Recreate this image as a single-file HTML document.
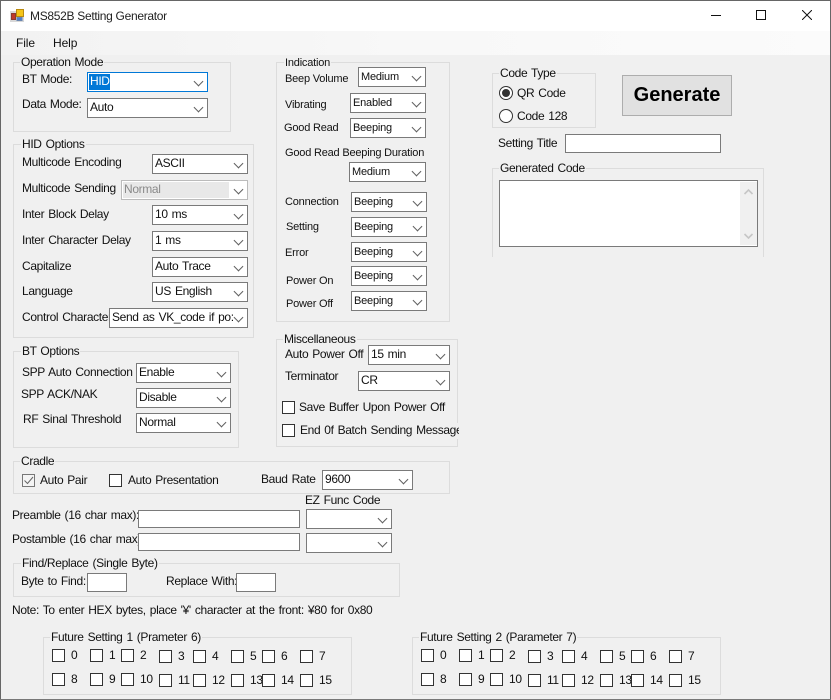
<!DOCTYPE html>
<html><head><meta charset="utf-8"><title>MS852B Setting Generator</title>
<style>
html,body{margin:0;padding:0;width:831px;height:700px;overflow:hidden;background:#f0f0f0}
body{position:relative;font:12px/14px "Liberation Sans",sans-serif;color:#111;word-spacing:1px;letter-spacing:-.35px}
div,span,b,i{position:absolute;box-sizing:border-box}
.t{white-space:nowrap;height:14px}
.g{border:1px solid #dcdcdc}
.l{background:#f0f0f0;padding:0 1px;white-space:nowrap;height:14px}
.c{background:#fff;border:1px solid #7a7a7a;height:20px;line-height:17px;padding-left:2px;white-space:nowrap;overflow:hidden}
.c::after{content:"";position:absolute;right:5px;top:5px;width:6px;height:6px;border-right:1px solid #606060;border-bottom:1px solid #606060;transform:rotate(45deg)}
.i{background:#fff;border:1px solid #7a7a7a}
.k{width:13px;height:13px;background:#fff;border:1px solid #333}
.s{word-spacing:0;font-size:11px;letter-spacing:-.2px}
.c.s{line-height:18px}
</style></head><body>
<div style="left:0;top:1px;width:831px;height:30px;background:#fff"></div>
<div style="left:0;top:31px;width:831px;height:24px;background:linear-gradient(90deg,#f2f2f2,#f8f8f8 50%,#fbfbfb)"></div>
<div style="left:0;top:0;width:831px;height:1px;background:#666"></div>
<div style="left:0;top:0;width:1px;height:700px;background:#666"></div>
<div style="left:830px;top:0;width:1px;height:700px;background:#666"></div>
<div style="left:0;top:699px;width:831px;height:1px;background:#777"></div>

<svg style="position:absolute;left:10px;top:8px" width="15" height="15" viewBox="0 0 15 15"><rect x="0" y="3" width="14" height="11" fill="#d8d8d8"/><rect x="6.5" y="1.5" width="7" height="7" fill="#f5c518" stroke="#b98a10"/><rect x="1.5" y="5.5" width="4" height="6" fill="#c0392b" stroke="#8a3a30"/><rect x="7" y="9.5" width="5" height="3" fill="#4a7fd0" stroke="#6a86b0"/></svg>
<span class="t" style="left:30px;top:9px;color:#222;letter-spacing:-.3px;word-spacing:0">MS852B Setting Generator</span>
<div style="left:711px;top:15px;width:10px;height:1px;background:#111"></div>
<div style="left:756px;top:10px;width:10px;height:10px;border:1px solid #111"></div>
<svg style="position:absolute;left:802px;top:10px" width="10" height="10" viewBox="0 0 10 10"><path d="M0 0L10 10M10 0L0 10" stroke="#111" stroke-width="1"/></svg>
<span class="t" style="left:16px;top:36px;letter-spacing:-.1px">File</span>
<span class="t" style="left:53px;top:36px;letter-spacing:-.1px">Help</span>

<div class="g" style="left:13px;top:62px;width:218px;height:70px"></div>
<span class="l" style="left:20px;top:55px">Operation Mode</span>
<span class="t" style="left:22px;top:72px">BT Mode:</span>
<div class="c" style="left:87px;top:72px;width:121px;border-color:#0078d7"><b style="left:1px;top:1px;width:21px;height:16px;background:#0078d7;color:#fff;font-weight:normal;line-height:15px;padding-left:1px">HID</b></div>
<span class="t" style="left:22px;top:97px">Data Mode:</span>
<div class="c" style="left:87px;top:98px;width:121px">Auto</div>

<div class="g" style="left:13px;top:144px;width:241px;height:194px"></div>
<span class="l" style="left:21px;top:137px">HID Options</span>
<span class="t" style="left:22px;top:155px">Multicode Encoding</span>
<div class="c" style="left:152px;top:154px;width:96px">ASCII</div>
<span class="t" style="left:22px;top:181px">Multicode Sending</span>
<div class="c" style="left:121px;top:180px;width:127px;border-color:#bbb;color:#8a8a8a"><b style="left:1px;top:1px;width:106px;height:16px;background:#e8e8e8;font-weight:normal;line-height:15px;padding-left:1px">Normal</b></div>
<span class="t" style="left:22px;top:207px">Inter Block Delay</span>
<div class="c" style="left:152px;top:205px;width:96px">10 ms</div>
<span class="t" style="left:22px;top:233px">Inter Character Delay</span>
<div class="c" style="left:152px;top:231px;width:96px">1 ms</div>
<span class="t" style="left:22px;top:259px">Capitalize</span>
<div class="c" style="left:152px;top:257px;width:96px">Auto Trace</div>
<span class="t" style="left:22px;top:284px">Language</span>
<div class="c" style="left:152px;top:282px;width:96px">US English</div>
<span class="t" style="left:22px;top:310px;width:87px;overflow:hidden">Control Character</span>
<div class="c" style="left:109px;top:308px;width:139px">Send as VK_code if po:</div>

<div class="g" style="left:13px;top:351px;width:226px;height:97px"></div>
<span class="l" style="left:21px;top:344px">BT Options</span>
<span class="t" style="left:22px;top:365px">SPP Auto Connection</span>
<div class="c" style="left:136px;top:363px;width:95px">Enable</div>
<span class="t" style="left:21px;top:387px">SPP ACK/NAK</span>
<div class="c" style="left:136px;top:388px;width:95px">Disable</div>
<span class="t" style="left:23px;top:412px">RF Sinal Threshold</span>
<div class="c" style="left:136px;top:413px;width:95px">Normal</div>

<div class="g" style="left:276px;top:62px;width:174px;height:260px"></div>
<span class="l s" style="left:284px;top:56px">Indication</span>
<span class="t s" style="left:285px;top:72px">Beep Volume</span>
<div class="c s" style="left:358px;top:67px;width:68px">Medium</div>
<span class="t s" style="left:285px;top:98px">Vibrating</span>
<div class="c s" style="left:350px;top:93px;width:76px">Enabled</div>
<span class="t s" style="left:284px;top:121px">Good Read</span>
<div class="c s" style="left:350px;top:118px;width:76px">Beeping</div>
<span class="t s" style="left:285px;top:146px">Good Read Beeping Duration</span>
<div class="c s" style="left:349px;top:162px;width:77px">Medium</div>
<span class="t s" style="left:285px;top:195px">Connection</span>
<div class="c s" style="left:351px;top:192px;width:76px">Beeping</div>
<span class="t s" style="left:286px;top:220px">Setting</span>
<div class="c s" style="left:351px;top:217px;width:76px">Beeping</div>
<span class="t s" style="left:285px;top:246px">Error</span>
<div class="c s" style="left:351px;top:242px;width:76px">Beeping</div>
<span class="t s" style="left:286px;top:274px">Power On</span>
<div class="c s" style="left:351px;top:266px;width:76px">Beeping</div>
<span class="t s" style="left:286px;top:297px">Power Off</span>
<div class="c s" style="left:351px;top:291px;width:76px">Beeping</div>

<div class="g" style="left:276px;top:339px;width:182px;height:108px"></div>
<span class="l" style="left:283px;top:332px">Miscellaneous</span>
<span class="t" style="left:285px;top:347px">Auto Power Off</span>
<div class="c" style="left:368px;top:345px;width:82px">15 min</div>
<span class="t" style="left:285px;top:369px">Terminator</span>
<div class="c" style="left:358px;top:371px;width:92px">CR</div>
<div class="k" style="left:282px;top:401px"></div>
<span class="t" style="left:299px;top:400px">Save Buffer Upon Power Off</span>
<div class="k" style="left:282px;top:424px"></div>
<span class="l" style="left:299px;top:423px;width:160px;overflow:hidden;height:16px">End 0f Batch Sending Message</span>

<div class="g" style="left:13px;top:461px;width:437px;height:33px"></div>
<span class="l" style="left:20px;top:454px">Cradle</span>
<div class="k" style="left:22px;top:474px;border-color:#777;background:#f4f4f4"><svg style="position:absolute;left:0;top:0" width="11" height="11" viewBox="0 0 11 11"><path d="M1.5 5.5L4.5 8.5L10 2" fill="none" stroke="#666" stroke-width="1"/></svg></div>
<span class="t" style="left:40px;top:473px">Auto Pair</span>
<div class="k" style="left:109px;top:474px"></div>
<span class="t" style="left:128px;top:473px">Auto Presentation</span>
<span class="t" style="left:261px;top:472px">Baud Rate</span>
<div class="c" style="left:322px;top:470px;width:91px">9600</div>
<span class="t" style="left:305px;top:493px">EZ Func Code</span>

<span class="t" style="left:12px;top:508px">Preamble (16 char max):</span>
<div class="i" style="left:138px;top:510px;width:162px;height:18px"></div>
<div class="c" style="left:306px;top:509px;width:86px"></div>
<span class="t" style="left:12px;top:532px;width:126px;overflow:hidden">Postamble (16 char max):</span>
<div class="i" style="left:138px;top:533px;width:162px;height:18px"></div>
<div class="c" style="left:306px;top:533px;width:86px"></div>

<div class="g" style="left:13px;top:563px;width:387px;height:34px"></div>
<span class="l" style="left:21px;top:556px">Find/Replace (Single Byte)</span>
<span class="t" style="left:21px;top:574px">Byte to Find:</span>
<div class="i" style="left:87px;top:573px;width:40px;height:19px"></div>
<span class="t" style="left:166px;top:574px">Replace With:</span>
<div class="i" style="left:236px;top:573px;width:40px;height:19px"></div>
<span class="t" style="left:12px;top:603px">Note: To enter HEX bytes, place '&yen;' character at the front: &yen;80 for 0x80</span>

<div class="g" style="left:492px;top:73px;width:104px;height:55px"></div>
<span class="l" style="left:499px;top:66px">Code Type</span>
<div style="left:499px;top:86px;width:14px;height:14px;border-radius:50%;border:1px solid #333;background:#fff"><b style="left:2px;top:2px;width:8px;height:8px;border-radius:50%;background:#333"></b></div>
<span class="t" style="left:517px;top:86px">QR Code</span>
<div style="left:499px;top:109px;width:14px;height:14px;border-radius:50%;border:1px solid #333;background:#fff"></div>
<span class="t" style="left:517px;top:109px">Code 128</span>
<div style="left:622px;top:75px;width:110px;height:41px;background:#e1e1e1;border:1px solid #adadad;text-align:center;font-weight:bold;font-size:20px;line-height:39px;color:#000;word-spacing:0;letter-spacing:0">Generate</div>
<span class="t" style="left:498px;top:136px">Setting Title</span>
<div class="i" style="left:565px;top:134px;width:156px;height:19px"></div>
<div style="left:492px;top:168px;width:272px;height:89px;border:1px solid #dcdcdc;border-bottom:0"></div>
<span class="l" style="left:499px;top:161px">Generated Code</span>
<div class="i" style="left:499px;top:180px;width:259px;height:67px">
<div style="left:240px;top:1px;width:17px;height:63px;background:#f0f0f0"></div>
<svg style="position:absolute;left:243px;top:7px" width="11" height="52" viewBox="0 0 11 52"><path d="M1.5 6L5.5 2L9.5 6M1.5 46L5.5 50L9.5 46" fill="none" stroke="#c6c6c6" stroke-width="1.6"/></svg>
</div>

<div class="g" style="left:43px;top:637px;width:309px;height:58px"></div>
<span class="l" style="left:50px;top:630px">Future Setting 1 (Prameter 6)</span>
<div class="k" style="left:52px;top:649px"></div><span class="t" style="left:71px;top:648px">0</span>
<div class="k" style="left:90px;top:649px"></div><span class="t" style="left:109px;top:648px">1</span>
<div class="k" style="left:121px;top:649px"></div><span class="t" style="left:140px;top:648px">2</span>
<div class="k" style="left:159px;top:650px"></div><span class="t" style="left:178px;top:649px">3</span>
<div class="k" style="left:193px;top:650px"></div><span class="t" style="left:212px;top:649px">4</span>
<div class="k" style="left:231px;top:650px"></div><span class="t" style="left:250px;top:649px">5</span>
<div class="k" style="left:262px;top:650px"></div><span class="t" style="left:281px;top:649px">6</span>
<div class="k" style="left:300px;top:650px"></div><span class="t" style="left:319px;top:649px">7</span>
<div class="k" style="left:52px;top:673px"></div><span class="t" style="left:71px;top:672px">8</span>
<div class="k" style="left:90px;top:673px"></div><span class="t" style="left:109px;top:672px">9</span>
<div class="k" style="left:121px;top:673px"></div><span class="t" style="left:140px;top:672px">10</span>
<div class="k" style="left:159px;top:674px"></div><span class="t" style="left:178px;top:673px">11</span>
<div class="k" style="left:193px;top:674px"></div><span class="t" style="left:212px;top:673px">12</span>
<div class="k" style="left:231px;top:674px"></div><span class="t" style="left:250px;top:673px">13</span>
<div class="k" style="left:262px;top:674px"></div><span class="t" style="left:281px;top:673px">14</span>
<div class="k" style="left:300px;top:674px"></div><span class="t" style="left:319px;top:673px">15</span>

<div class="g" style="left:412px;top:637px;width:309px;height:58px"></div>
<span class="l" style="left:419px;top:630px">Future Setting 2 (Parameter 7)</span>
<div class="k" style="left:421px;top:649px"></div><span class="t" style="left:440px;top:648px">0</span>
<div class="k" style="left:459px;top:649px"></div><span class="t" style="left:478px;top:648px">1</span>
<div class="k" style="left:490px;top:649px"></div><span class="t" style="left:509px;top:648px">2</span>
<div class="k" style="left:528px;top:650px"></div><span class="t" style="left:547px;top:649px">3</span>
<div class="k" style="left:562px;top:650px"></div><span class="t" style="left:581px;top:649px">4</span>
<div class="k" style="left:600px;top:650px"></div><span class="t" style="left:619px;top:649px">5</span>
<div class="k" style="left:631px;top:650px"></div><span class="t" style="left:650px;top:649px">6</span>
<div class="k" style="left:669px;top:650px"></div><span class="t" style="left:688px;top:649px">7</span>
<div class="k" style="left:421px;top:673px"></div><span class="t" style="left:440px;top:672px">8</span>
<div class="k" style="left:459px;top:673px"></div><span class="t" style="left:478px;top:672px">9</span>
<div class="k" style="left:490px;top:673px"></div><span class="t" style="left:509px;top:672px">10</span>
<div class="k" style="left:528px;top:674px"></div><span class="t" style="left:547px;top:673px">11</span>
<div class="k" style="left:562px;top:674px"></div><span class="t" style="left:581px;top:673px">12</span>
<div class="k" style="left:600px;top:674px"></div><span class="t" style="left:619px;top:673px">13</span>
<div class="k" style="left:631px;top:674px"></div><span class="t" style="left:650px;top:673px">14</span>
<div class="k" style="left:669px;top:674px"></div><span class="t" style="left:688px;top:673px">15</span>
</body></html>
